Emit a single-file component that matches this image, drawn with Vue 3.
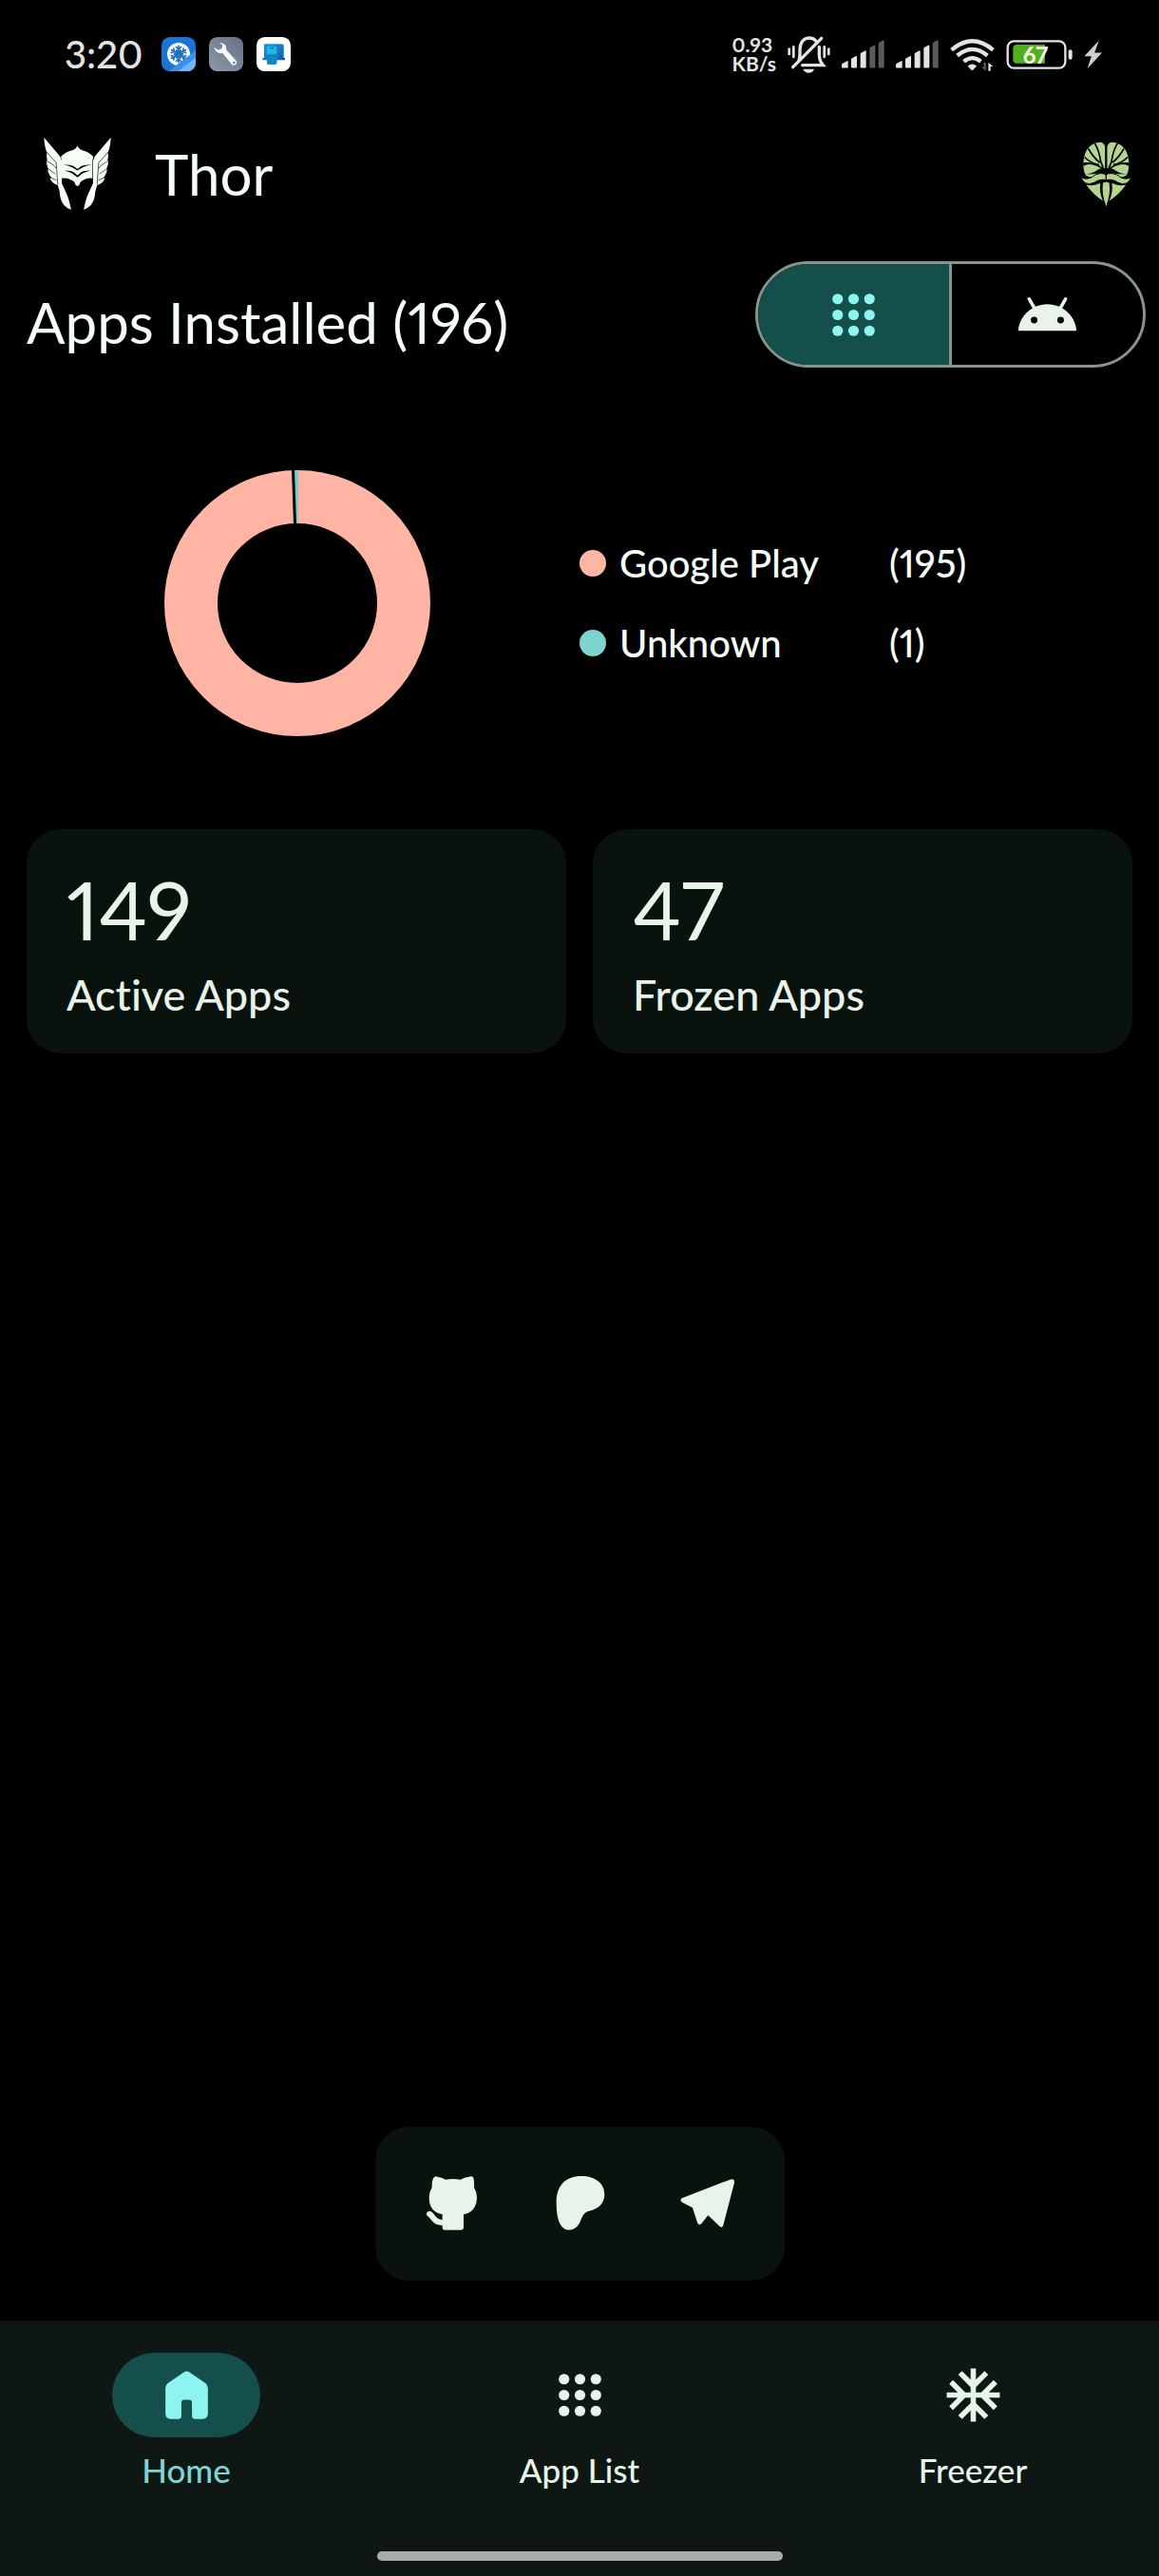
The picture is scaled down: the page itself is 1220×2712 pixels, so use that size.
<script setup>
import { ref } from 'vue'

const filter = ref('user')
const installers = [
  { name: 'Google Play', count: 195, tone: 'coral' },
  { name: 'Unknown', count: 1, tone: 'teal' },
]
const stats = [
  { value: 149, label: 'Active Apps' },
  { value: 47, label: 'Frozen Apps' },
]
const dots = [6, 12, 18].flatMap((y) => [6, 12, 18].map((x) => ({ x, y })))
const signals = [3, 4]
const bars = [
  'M442 158V148q0-3 3-4l14-8q3-1 3 2v20q0 0-3 0H445q-3 0-3-3z',
  'M472 155V131q0-3 3-4l11-6q4-2 4 2v32q0 3-3 3H475q-3 0-3-3z',
  'M501 155V115q0-3 3-5l11-6q4-2 4 2v49q0 3-3 3H504q-3 0-3-3z',
  'M530 155V98q0-3 3-5l11-6q4-2 4 2v66q0 3-3 3H533q-3 0-3-3z',
  'M558 155V82q0-3 3-5l11-6q4-2 4 2v82q0 3-3 3H561q-3 0-3-3z',
]
</script>

<template>
  <div class="screen">
    <div class="status">
      <div class="status-left">
        <span class="clock">3:20</span>
        <svg class="badge" viewBox="0 0 108 108" aria-hidden="true">
          <defs>
            <clipPath id="badge-clip"><rect width="108" height="108" rx="26" /></clipPath>
            <linearGradient id="tool-bg" x1="0" y1="1" x2="1" y2="0">
              <stop offset="0" stop-color="#8b99aa" /><stop offset="1" stop-color="#647385" />
            </linearGradient>
            <linearGradient id="link-bg" x1="0" y1="0" x2="1" y2="1">
              <stop offset="0" stop-color="#1b9be2" /><stop offset="1" stop-color="#125b9f" />
            </linearGradient>
          </defs>
          <g clip-path="url(#badge-clip)">
            <rect width="108" height="108" fill="#1976d2" />
            <circle cx="54" cy="54" r="36" fill="#fff" />
            <g stroke="#1f6fbd" stroke-width="5" fill="none">
              <g v-for="a in [0, 60, 120, 180, 240, 300]" :key="a" :transform="`rotate(${a} 54 54)`">
                <path d="M54 54V26M45 30l9 9 9-9M46 41l8 8 8-8" />
              </g>
            </g>
            <path d="M22 108L108 42v66z" fill="#3c8fe6" />
            <path d="M52 108L108 65v43z" fill="#6db7fb" />
          </g>
        </svg>
        <svg class="badge" viewBox="0 0 108 108" aria-hidden="true">
          <rect width="108" height="108" rx="26" fill="url(#tool-bg)" />
          <path d="M34 19c14-1 23 9 20 21l29 31c8 7 4 18-5 18-4 0-6-2-8-5L43 51C29 54 18 43 17 32l12 9 11-4 3-11z" fill="#f5f7fa" />
          <circle cx="79" cy="81" r="4" fill="#76869a" />
        </svg>
        <svg class="badge" viewBox="0 0 108 108" aria-hidden="true">
          <rect width="108" height="108" rx="26" fill="#fff" />
          <path d="M24 22h57q5 0 5 5v38h4v8H19v-8h5z" fill="url(#link-bg)" />
          <rect x="33" y="30" width="31" height="56" rx="4" fill="#22b8ee" />
          <path d="M33 54h31v28q0 4-4 4H37q-4 0-4-4z" fill="#1484c8" />
          <path d="M43 35h11" stroke="#075886" stroke-width="3" />
        </svg>
      </div>
      <div class="status-right">
        <span class="speed">0.93<br />KB/s</span>
        <svg class="bell" viewBox="264 56 135 117" aria-hidden="true">
          <g fill="none" stroke="#e4e4e4" stroke-width="8" stroke-linecap="round">
            <path d="M300 133q3-8 3-20v-15c0-24 14-36 29-36 10 0 18 4 23 11M364 90v24q0 20 12 34H311M281 154L371 63" stroke-width="10" />
            <path d="M269 97v16M283 90v32M380 90v32M394 97v16" />
          </g>
          <path d="M313 160h35q-4 12-17 12t-18-12z" fill="#e4e4e4" />
        </svg>
        <svg v-for="level in signals" :key="level" class="signal" viewBox="442 70 135 89" aria-hidden="true">
          <path v-for="(d, i) in bars" :key="d" :d="d" :fill="i < level ? '#e4e4e4' : '#5b5b5b'" />
        </svg>
        <svg class="wifi" viewBox="785 62 142 104" aria-hidden="true">
          <g fill="none" stroke="#e4e4e4" stroke-width="13">
            <path d="M790 99q66-56 132 0M808 117q48-40 96 0M829 136q27-22 54 0" />
          </g>
          <path d="M841 150q15-12 29 0l-12 13q-2 2-5 0z" fill="#e4e4e4" />
          <path d="M899 139v27l-14-13h7v-14z" fill="#5b5b5b" />
          <path d="M907 166v-27l15 13h-8v14z" fill="#e4e4e4" />
        </svg>
        <span class="battery">
          <svg viewBox="972 66 210 94" aria-hidden="true">
            <rect x="976" y="70" width="184" height="86" rx="20" fill="none" stroke="#e4e4e4" stroke-width="7" />
            <path d="M1095 81v60h-90q-12 0-12-12V93q0-12 12-12z" fill="#52b01c" />
            <rect x="1170" y="97" width="12" height="32" rx="6" fill="#e4e4e4" />
          </svg>
          <span class="charge">67</span>
        </span>
        <svg class="bolt" viewBox="1202 68 58 92" aria-hidden="true">
          <path d="M1250 69l-47 50h23l-13 40 47-51h-24z" fill="#cfcfcf" />
        </svg>
      </div>
    </div>

    <header class="topbar">
      <svg class="helmet" viewBox="75 45 216 235" aria-hidden="true">
        <path d="M183 73q6 13 21 16 18 5 30 19l-3 12v57q-18-2-28 5-11 3-14 16l-6 4-6-4q-3-13-14-16-10-7-30-5v-57l-3-12q12-14 31-19 16-3 22-16z" fill="#f6fff7" />
        <path d="M138 133q22 0 33 5l12 9 12-9q12-5 33-5-17 4-27 8l-18 11-18-11q-10-4-27-8zM140 152q24 0 33 7l10 9 10-9q9-7 33-7-18 4-26 9l-17 13-17-13q-8-5-26-9z" fill="#000" />
        <g v-for="side in ['', 'translate(366 0) scale(-1 1)']" :key="side" :transform="side">
          <path d="M76 46l51 60 6 15v72l17 37q6 14 13 47-29-9-35-40-1-20-8-38-20-6-25-23l7 1q-13-13-14-29l5 3q-10-14-8-32l2 2q-4-15-2-27-8-20-9-48z" fill="#f6fff7" />
          <path d="M83 91l32 36 5 70M87 122l21 14 7 9M93 149l19 14M100 176l16 7" fill="none" stroke="#000" stroke-width="2" />
        </g>
      </svg>
      <h1>Thor</h1>
      <button class="profile" type="button" aria-label="Root manager">
        <svg viewBox="80 55 165 206" aria-hidden="true">
          <g v-for="side in ['', 'translate(324 0) scale(-1 1)']" :key="side" :transform="side">
            <path d="M159 72q-4-15-17-15-26 3-40 22-11 17-12 46 0 24 8 37 12 8 28 4 18-4 33-14z" fill="#b4d590" />
            <path d="M126 60q14 22 19 58l8 20M106 77q14 26 36 44M94 104q19 19 46 24" fill="none" stroke="#000" stroke-width="5" />
            <path d="M90 121q36-2 62 17l10 2v24l-17-10-24 3-29 1q30-2 46-16-24 4-48-12z" fill="#000" />
            <path d="M92 131q10-5 25-4 16 3 29 12-30 15-54-8z" fill="#b4d590" />
            <path d="M81 163q10 14 33 6 14-13 31-14 13-1 17 7v14q-22-4-37 8-33 15-44-21z" fill="#b4d590" stroke="#000" stroke-width="3" />
            <path d="M99 191q22 6 45-5-5 27 8 56-31-20-53-51z" fill="#b4d590" />
            <path d="M163 182l-11 3q-5 39 11 75z" fill="#b4d590" />
          </g>
          <path d="M162 60v80" stroke="#000" stroke-width="5" />
        </svg>
      </button>
    </header>

    <main>
      <section class="heading">
        <h2>Apps Installed (196)</h2>
        <div class="segments" role="group" aria-label="App type">
          <button type="button" aria-label="User apps" :aria-pressed="filter === 'user'" @click="filter = 'user'">
            <svg class="icon" viewBox="0 0 24 24"><circle v-for="d in dots" :key="`${d.x}-${d.y}`" :cx="d.x" :cy="d.y" r="2" /></svg>
          </button>
          <button type="button" aria-label="System apps" :aria-pressed="filter === 'system'" @click="filter = 'system'">
            <svg class="icon" viewBox="0 0 24 24"><path d="M17.6 9.48l1.84-3.18c.16-.31.04-.69-.26-.85-.29-.15-.65-.06-.83.22l-1.88 3.24c-2.86-1.21-6.08-1.21-8.94 0L5.65 5.67c-.19-.29-.58-.38-.87-.2-.28.18-.37.54-.22.83L6.4 9.48C3.3 11.25 1.28 14.44 1 18h22c-.28-3.56-2.3-6.75-5.4-8.52zM7 15.25a1.25 1.25 0 110-2.5 1.25 1.25 0 010 2.5zm10 0a1.25 1.25 0 110-2.5 1.25 1.25 0 010 2.5z" /></svg>
          </button>
        </div>
      </section>

      <section class="installers">
        <svg class="donut" viewBox="0 0 280 280" role="img" aria-label="Apps by installer">
          <circle cx="140" cy="140" r="112" fill="none" stroke="#ffb4a4" stroke-width="56" />
          <path d="M134 0h6v57h-4z" fill="#000" />
          <path d="M137 0h4v56h-2z" fill="#80cbc6" />
        </svg>
        <ul class="legend">
          <li v-for="item in installers" :key="item.name">
            <span class="dot" :class="item.tone"></span>
            <span class="name">{{ item.name }}</span>
            <span>({{ item.count }})</span>
          </li>
        </ul>
      </section>

      <section class="stats">
        <article v-for="stat in stats" :key="stat.label" class="card">
          <strong>{{ stat.value }}</strong>
          <span>{{ stat.label }}</span>
        </article>
      </section>

      <div class="social">
        <a href="#github" aria-label="GitHub">
          <svg class="icon" viewBox="188 201 201 201"><path d="M231 218q4-2 9 0 14 2 26 9 23-4 47 0 12-7 27-9 10-3 14 3 3 8 2 31 10 16 9 32-1 44-42 53v42q0 7-7 7h-53q-7 0-7-7v-8c-31 2-36-24-47-29-8-7 0-18 11-14 12 6 14 25 36 26v-17q-42-9-42-53-1-16 9-32-1-27 8-34z" /></svg>
        </a>
        <a href="#patreon" aria-label="Patreon">
          <svg class="icon" viewBox="590 201 201 201"><path d="M616 300c0-52 26-84 80-84 44 0 72 24 72 58 0 28-19 46-48 52-17 4-22 16-29 34-7 16-18 26-35 26-28 0-40-35-40-86z" /></svg>
        </a>
        <a href="#telegram" aria-label="Telegram">
          <svg class="icon" viewBox="992 201 201 201"><path d="M1012 286l152-59q16-5 14 10l-35 134q-3 10-11 4l-37-35-21 26q-6 6-12-1l-16-49-32-17q-10-7-2-13z" /></svg>
        </a>
      </div>
    </main>

    <nav aria-label="Main">
      <a href="#home" class="active" aria-current="page">
        <span class="indicator">
          <svg class="icon" viewBox="0 0 24 24"><path d="M4 9.300q0-1 .8-1.700l6-4.100q1.200-.9 2.400 0l6 4.100q.8.700.8 1.700V19q0 2-2 2h-3q-1 0-1-1v-5q0-1.200-1-1.200h-2q-1 0-1 1.200v5q0 1-1 1H6q-2 0-2-2z" /></svg>
        </span>
        Home
      </a>
      <a href="#apps">
        <span class="indicator">
          <svg class="icon" viewBox="0 0 24 24"><circle v-for="d in dots" :key="`${d.x}-${d.y}`" :cx="d.x" :cy="d.y" r="2" /></svg>
        </span>
        App List
      </a>
      <a href="#freezer">
        <span class="indicator">
          <svg class="icon" viewBox="0 0 24 24"><path d="M22 11h-4.170l3.240-3.240-1.410-1.420L15 11h-2V9l4.660-4.660-1.420-1.410L13 6.170V2h-2v4.170L7.760 2.930 6.340 4.340 11 9v2H9L4.340 6.340 2.930 7.760 6.170 11H2v2h4.170l-3.240 3.240 1.410 1.420L9 13h2v2l-4.660 4.660 1.420 1.410L11 17.830V22h2v-4.170l3.240 3.240 1.420-1.410L13 15v-2h2l4.660 4.660 1.410-1.420L17.830 13H22z" /></svg>
        </span>
        Freezer
      </a>
    </nav>
    <div class="gesture"><span></span></div>
  </div>
</template>

<style>
body {
  margin: 0;
  background: #000;
}
</style>

<style scoped>
.screen {
  display: flex;
  flex-direction: column;
  min-height: 100vh;
  background: #000;
  color: #f5fef6;
  font-family: Lato, "Liberation Sans", sans-serif;
  font-variant-ligatures: none;
  font-variant-numeric: proportional-nums;
}
svg {
  display: block;
  flex: none;
}
button {
  padding: 0;
  border: 0;
  background: none;
  color: inherit;
  font: inherit;
}
h1,
h2 {
  margin: 0;
  font-size: 60px;
  font-weight: 400;
  line-height: 76px;
}
.icon {
  width: 67px;
  height: 67px;
  fill: currentColor;
}
.status {
  display: flex;
  justify-content: space-between;
  align-items: center;
  height: 114px;
  padding: 0 60px 0 68px;
  color: #e4e4e4;
}
.status-left,
.status-right {
  display: flex;
  align-items: center;
}
.status-left {
  gap: 14px;
}
.clock {
  margin-right: 6px;
  font-size: 40px;
  font-weight: 500;
  line-height: 48px;
}
.badge {
  width: 36px;
  height: 36px;
}
.status-right {
  gap: 12px;
}
.speed {
  font-size: 21px;
  font-weight: 700;
  line-height: 20px;
}
.bell {
  width: 45px;
  height: 39px;
}
.signal {
  width: 45px;
  height: 30px;
}
.wifi {
  width: 47px;
  height: 35px;
}
.battery {
  position: relative;
  width: 70px;
}
.battery svg {
  width: 70px;
  height: 31px;
}
.charge {
  position: absolute;
  inset: 0 16px 0 8px;
  color: #f2f8ee;
  font-size: 24px;
  font-weight: 700;
  line-height: 31px;
  text-align: center;
}
.bolt {
  width: 19px;
  height: 31px;
}
.topbar {
  display: flex;
  align-items: center;
  height: 138px;
  padding: 0 28px 0 46px;
}
.helmet {
  width: 71px;
  height: 78px;
  margin-right: 46px;
}
.profile {
  margin-left: auto;
}
.profile svg {
  width: 55px;
  height: 69px;
}
main {
  display: flex;
  flex: 1;
  flex-direction: column;
  padding: 23px 28px 42px;
}
.heading {
  display: flex;
  justify-content: space-between;
  align-items: flex-start;
  margin-right: -14px;
}
.heading h2 {
  padding-top: 26px;
}
.segments {
  display: flex;
  box-sizing: border-box;
  width: 411px;
  height: 112px;
  overflow: hidden;
  border: 3px solid #869489;
  border-radius: 56px;
}
.segments button {
  display: flex;
  flex: 1;
  align-items: center;
  justify-content: center;
  color: #e8f3e9;
}
.segments button + button {
  border-left: 3px solid #869489;
}
.segments button[aria-pressed="true"] {
  background: #154f4c;
  color: #8df4ef;
}
.installers {
  display: grid;
  grid-template-columns: 1fr 1fr;
  align-items: center;
  margin-top: 108px;
}
.donut {
  width: 280px;
  height: 280px;
  margin-left: 145px;
}
.legend {
  display: grid;
  gap: 36px;
  margin: 0;
  padding: 0;
  list-style: none;
  font-size: 40px;
  font-weight: 500;
  line-height: 48px;
}
.legend li {
  display: flex;
  align-items: center;
}
.dot {
  width: 28px;
  height: 28px;
  margin-right: 14px;
  border-radius: 50%;
}
.coral {
  background: #ffb4a4;
}
.teal {
  background: #7dd5d2;
}
.name {
  width: 284px;
}
.stats {
  display: grid;
  grid-template-columns: 1fr 1fr;
  gap: 28px;
  margin-top: 98px;
}
.card {
  display: flex;
  flex-direction: column;
  gap: 10px;
  padding: 32px 42px 34px;
  border-radius: 36px;
  background: #09120d;
  color: #e8f3e9;
  font-size: 45px;
  font-weight: 500;
  line-height: 56px;
}
.card strong {
  font-size: 86px;
  font-weight: 400;
  line-height: 104px;
}
.social {
  display: flex;
  align-self: center;
  gap: 67px;
  margin-top: auto;
  padding: 47px 48px 48px;
  border-radius: 36px;
  background: #09120d;
}
.social a {
  color: #e8f3e9;
}
nav {
  display: grid;
  grid-template-columns: repeat(3, 1fr);
  gap: 22px;
  padding: 34px 0 65px;
  background: #0f1714;
}
nav a {
  display: flex;
  flex-direction: column;
  align-items: center;
  gap: 13px;
  color: #e4f5e9;
  font-size: 35px;
  font-weight: 500;
  line-height: 42px;
  text-decoration: none;
}
.indicator {
  display: flex;
  align-items: center;
  justify-content: center;
  width: 156px;
  height: 89px;
  border-radius: 45px;
}
.active {
  color: #7dd5d2;
}
.active .indicator {
  background: #154f4c;
  color: #8df4ef;
}
.gesture {
  display: flex;
  justify-content: center;
  padding-bottom: 16px;
  background: #0f1714;
}
.gesture span {
  width: 35%;
  height: 10px;
  border-radius: 5px;
  background: #a9aba9;
}
</style>
